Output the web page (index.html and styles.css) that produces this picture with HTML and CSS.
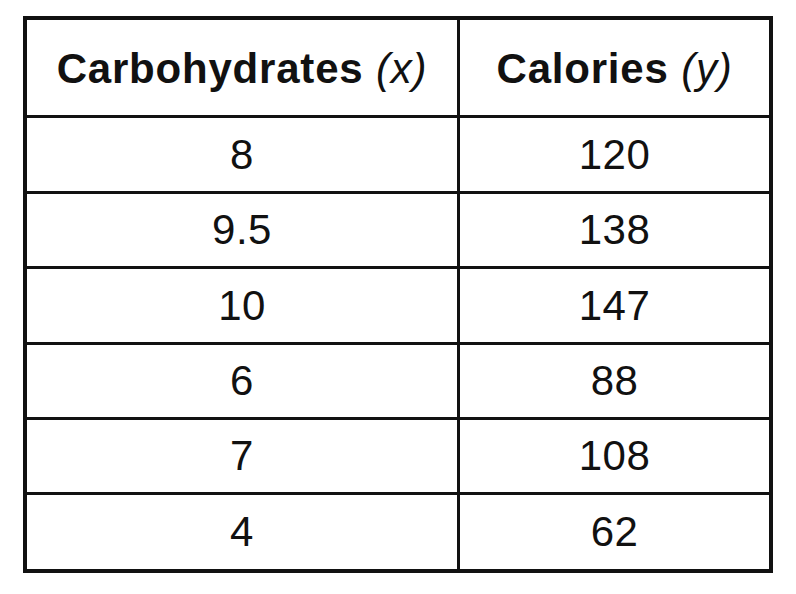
FILE: index.html
```html
<!DOCTYPE html>
<html lang="en">
<head>
<meta charset="utf-8">
<title>Carbohydrates and Calories</title>
<link rel="stylesheet" href="styles.css">
</head>
<body>
<table class="data">
  <thead>
    <tr class="head-row">
      <th class="col-x">Carbohydrates <span class="var">(x)</span></th>
      <th class="col-y">Calories <span class="var">(y)</span></th>
    </tr>
  </thead>
  <tbody>
    <tr class="r1"><td class="col-x">8</td><td class="col-y">120</td></tr>
    <tr class="r2"><td class="col-x">9.5</td><td class="col-y">138</td></tr>
    <tr class="r3"><td class="col-x">10</td><td class="col-y">147</td></tr>
    <tr class="r4"><td class="col-x">6</td><td class="col-y">88</td></tr>
    <tr class="r5"><td class="col-x">7</td><td class="col-y">108</td></tr>
    <tr class="r6 last"><td class="col-x">4</td><td class="col-y">62</td></tr>
  </tbody>
</table>
</body>
</html>
```

FILE: styles.css
```css
html, body {
  margin: 0;
  padding: 0;
  background: #ffffff;
}

body {
  padding: 16px 0 0 23px;
  font-family: "Liberation Sans", Arial, Helvetica, sans-serif;
  color: #111111;
}

.data {
  border-collapse: separate;
  border-spacing: 0;
  border: 4px solid #111111;
  width: 750px;
  table-layout: fixed;
}

.data th,
.data td {
  padding: 0;
  text-align: center;
  vertical-align: middle;
  box-sizing: border-box;
  border-bottom: 3px solid #111111;
}

.data .col-x {
  width: 433px;
  border-right: 3px solid #111111;
}

.data .col-y {
  width: 309px;
}

.data th {
  font-size: 42px;
  font-weight: bold;
  letter-spacing: 0.8px;
  height: 98px;
  padding-top: 2px;
}

.data .var {
  font-style: italic;
  font-weight: normal;
}

.data td {
  font-size: 42px;
  font-weight: normal;
  letter-spacing: 0.5px;
}

.r1 td { height: 76px; }
.r2 td { height: 75px; }
.r3 td { height: 76px; }
.r4 td { height: 75px; }
.r5 td { height: 75px; }
.r6 td { height: 74px; border-bottom: none; }
```
